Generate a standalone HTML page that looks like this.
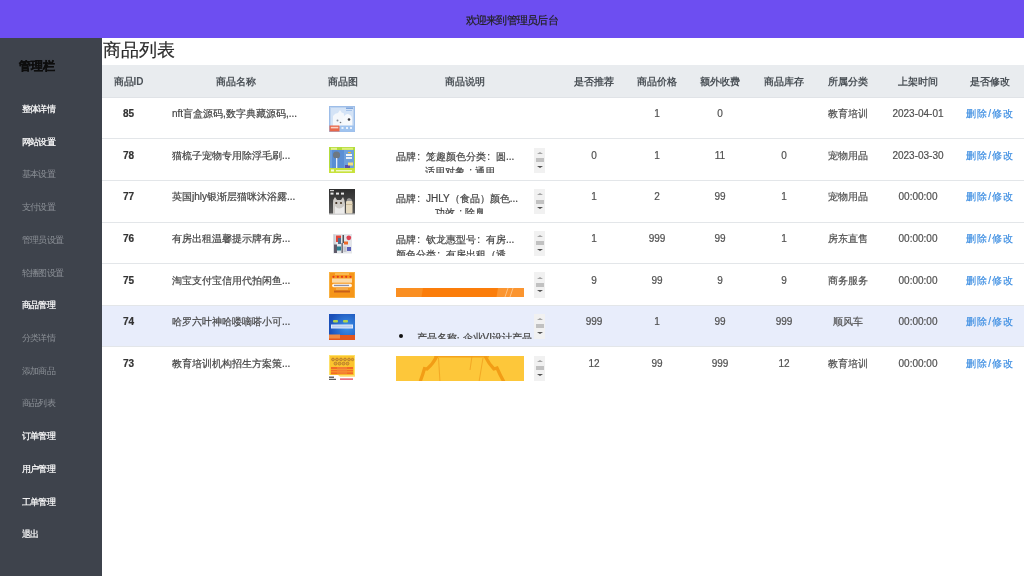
<!DOCTYPE html>
<html><head><meta charset="utf-8"><style>
*{box-sizing:border-box;margin:0;padding:0}
html,body{width:1024px;height:576px;overflow:hidden;background:#fff;font-family:"Liberation Sans", sans-serif;}
.a{position:absolute;white-space:nowrap}
.c,.a{-webkit-text-stroke:0.2px currentColor}
.top{position:absolute;left:0;top:0;width:1024px;height:38.2px;background:#6d4ef1}
.side{position:absolute;left:0;top:38.2px;width:102px;height:540px;background:#3e434c}
.mi{position:absolute;left:22px;font-size:9px;letter-spacing:-0.8px;line-height:12px;height:12px;color:#fff;white-space:nowrap}
.mi{-webkit-text-stroke:0.2px #fff}
.mi.g{color:#8b9096;-webkit-text-stroke:0}
.th0{position:absolute;left:102px;top:65px;width:922px;height:32.9px;background:#e9ecef;border-bottom:1px solid #e0e3e7}
.hc{position:absolute;top:75.5px;height:12px;line-height:12px;font-size:10px;font-weight:bold;color:#4d5359;text-align:center;white-space:nowrap}
.row{position:absolute;left:102px;width:922px;height:41.6px;border-bottom:1px solid #e3e6e9}
.c{position:absolute;height:12px;line-height:12px;font-size:10px;color:#505050;text-align:center;white-space:nowrap}
.im{position:absolute;width:26px;height:26px;overflow:hidden}
.im4{position:absolute;width:19px;height:19.5px;overflow:hidden}
.sb{position:absolute;left:534.3px;width:11px;height:25.3px;background:#f1f1f1}
.sb .up{position:absolute;left:2.5px;top:4.3px;width:0;height:0;border-left:3px solid transparent;border-right:3px solid transparent;border-bottom:2.6px solid #a3a3a3}
.sb .th{position:absolute;left:2px;top:10.5px;width:7.8px;height:4px;background:#c1c1c1}
.sb .dn{position:absolute;left:2.5px;top:18.2px;width:0;height:0;border-left:3px solid transparent;border-right:3px solid transparent;border-top:2.6px solid #505050}
.lk{color:#3f8fe2;letter-spacing:0.9px}
</style></head><body><div id="w" style="position:absolute;left:0;top:0;width:1024px;height:576px;will-change:transform;background:#fff">
<div class="top"></div>
<div class="a" style="left:465.5px;top:13.5px;font-size:11px;letter-spacing:-0.75px;line-height:13px;color:#222">欢迎来到管理员后台</div>
<div class="side"></div>
<div class="a" style="left:19.4px;top:59px;font-size:12px;line-height:14px;font-weight:bold;color:#0d0d0d;-webkit-text-stroke:0.35px #0d0d0d">管理栏</div>

<div class="mi" style="top:103.00px">整体详情</div>
<div class="mi" style="top:135.72px">网站设置</div>
<div class="mi g" style="top:168.44px">基本设置</div>
<div class="mi g" style="top:201.16px">支付设置</div>
<div class="mi g" style="top:233.88px">管理员设置</div>
<div class="mi g" style="top:266.60px">轮播图设置</div>
<div class="mi" style="top:299.32px">商品管理</div>
<div class="mi g" style="top:332.04px">分类详情</div>
<div class="mi g" style="top:364.76px">添加商品</div>
<div class="mi g" style="top:397.48px">商品列表</div>
<div class="mi" style="top:430.20px">订单管理</div>
<div class="mi" style="top:462.92px">用户管理</div>
<div class="mi" style="top:495.64px">工单管理</div>
<div class="mi" style="top:528.36px">退出</div>
<div class="a" style="left:103px;top:39.3px;font-size:17.5px;line-height:23px;color:#2b2b2b">商品列表</div>
<div class="th0"></div>
<div class="hc" style="left:102px;width:53px">商品ID</div>
<div class="hc" style="left:155px;width:162px">商品名称</div>
<div class="hc" style="left:317px;width:52px">商品图</div>
<div class="hc" style="left:369px;width:192px">商品说明</div>
<div class="hc" style="left:561px;width:66px">是否推荐</div>
<div class="hc" style="left:627px;width:60px">商品价格</div>
<div class="hc" style="left:687px;width:66px">额外收费</div>
<div class="hc" style="left:753px;width:62px">商品库存</div>
<div class="hc" style="left:815px;width:66px">所属分类</div>
<div class="hc" style="left:881px;width:74px">上架时间</div>
<div class="hc" style="left:955px;width:70px">是否修改</div>
<div class="row" style="top:97.90px;"></div>
<div class="c" style="left:102px;width:53px;top:108.10px;font-weight:bold;color:#333">85</div>
<div class="c" style="left:172px;top:108.10px;text-align:left;color:#444">nft盲盒源码,数字典藏源码,...</div>
<div class="a" style="left:329.4px;top:105.70px;width:26px;height:26px;overflow:hidden"><svg width="26" height="26" viewBox="0 0 26 26" style="position:absolute;left:0;top:0">
<rect x="0" y="0" width="26" height="26" fill="#bcd3f0"/>
<rect x="0.5" y="0.5" width="25" height="25" fill="none" stroke="#9dbde8" stroke-width="1"/>
<rect x="2" y="2" width="22" height="18" fill="#d4e3f6"/>
<path d="M4 20 V10 Q6 7 9 7 L11 4 L13 7 Q15 6 15 9 V20 Z" fill="#f4f7fb"/>
<path d="M14 20 V12 Q16 8 19 8 Q23 9 23 13 V20 Z" fill="#f7f9fc"/>
<rect x="17" y="1.5" width="7" height="1.5" fill="#7fa6dc"/>
<rect x="17" y="4" width="6" height="1" fill="#a6c3ea"/>
<circle cx="8.5" cy="14.5" r="1" fill="#8a8f99"/>
<circle cx="11.5" cy="16.5" r="0.8" fill="#707680"/>
<circle cx="20" cy="13.5" r="1.3" fill="#3a3a40"/>
<rect x="0.5" y="19.5" width="10" height="6" fill="#e8674a"/>
<rect x="1.8" y="20.8" width="7.5" height="1.6" fill="#fbd2c4"/>
<rect x="11" y="19.5" width="14.5" height="6" fill="#9fc3ef"/>
<rect x="12.5" y="21" width="2" height="2" fill="#e9f1fc"/>
<rect x="17" y="21" width="2" height="2" fill="#e9f1fc"/>
<rect x="21" y="21" width="2" height="2" fill="#e9f1fc"/>
</svg></div>
<div class="c" style="left:627px;width:60px;top:108.10px">1</div>
<div class="c" style="left:687px;width:66px;top:108.10px">0</div>
<div class="c" style="left:815px;width:66px;top:108.10px">教育培训</div>
<div class="c" style="left:881px;width:74px;top:108.10px">2023-04-01</div>
<div class="c lk" style="left:955px;width:70px;top:108.10px">删除/修改</div>
<div class="row" style="top:139.50px;"></div>
<div class="c" style="left:102px;width:53px;top:149.70px;font-weight:bold;color:#333">78</div>
<div class="c" style="left:172px;top:149.70px;text-align:left;color:#444">猫梳子宠物专用除浮毛刷...</div>
<div class="a" style="left:329.4px;top:147.30px;width:26px;height:26px;overflow:hidden"><svg width="26" height="26" viewBox="0 0 26 26" style="position:absolute;left:0;top:0">
<rect x="0" y="0" width="26" height="26" fill="#b4dc3c"/>
<rect x="1" y="3" width="24" height="18" fill="#6ea0dc"/>
<rect x="3" y="3" width="12" height="18" fill="#5a8ed4"/>
<rect x="13" y="0.8" width="11" height="2" fill="#dcef7a"/>
<rect x="2" y="0.8" width="6" height="2" fill="#e4f290"/>
<circle cx="7.5" cy="8" r="3.6" fill="#6e7882"/>
<rect x="7" y="11" width="1.3" height="10" fill="#e6eef8"/>
<rect x="17" y="7" width="6" height="2" fill="#f4f7fb"/>
<rect x="17" y="10" width="6" height="2" fill="#e6eef8"/>
<rect x="19" y="5" width="3" height="1.2" fill="#f2c030"/>
<rect x="16" y="18" width="5" height="3" fill="#5a4fa8"/>
<rect x="19" y="15.5" width="5" height="3" fill="#f3e080"/>
<rect x="0" y="21" width="26" height="5" fill="#c8e23c"/>
<rect x="2" y="22.5" width="3" height="2" fill="#f6fbe0"/>
<rect x="7" y="23" width="16" height="1.4" fill="#eff8c8"/>
</svg></div>
<div class="a" style="left:386px;top:147.50px;width:148px;height:25.2px;overflow:hidden">
<div class="a" style="left:10px;top:2.8px;font-size:10px;line-height:13px;color:#444">品牌<span style="display:inline-block;width:10px;padding-left:1.2px">:</span>笼趣颜色分类<span style="display:inline-block;width:10px;padding-left:1.2px">:</span>圆...</div>
<div class="a" style="left:10px;width:128px;top:17.4px;font-size:10px;line-height:13px;color:#444;text-align:center">适用对象<span style="display:inline-block;width:10px;padding-left:1.2px">:</span>通用</div>
</div>
<div class="sb" style="top:147.50px"><div class="up"></div><div class="th"></div><div class="dn"></div></div>
<div class="c" style="left:561px;width:66px;top:149.70px">0</div>
<div class="c" style="left:627px;width:60px;top:149.70px">1</div>
<div class="c" style="left:687px;width:66px;top:149.70px">11</div>
<div class="c" style="left:753px;width:62px;top:149.70px">0</div>
<div class="c" style="left:815px;width:66px;top:149.70px">宠物用品</div>
<div class="c" style="left:881px;width:74px;top:149.70px">2023-03-30</div>
<div class="c lk" style="left:955px;width:70px;top:149.70px">删除/修改</div>
<div class="row" style="top:181.10px;"></div>
<div class="c" style="left:102px;width:53px;top:191.30px;font-weight:bold;color:#333">77</div>
<div class="c" style="left:172px;top:191.30px;text-align:left;color:#444">英国jhly银渐层猫咪沐浴露...</div>
<div class="a" style="left:329.4px;top:188.90px;width:26px;height:26px;overflow:hidden"><svg width="26" height="26" viewBox="0 0 26 26" style="position:absolute;left:0;top:0">
<defs><linearGradient id="g3" x1="0" y1="0" x2="0" y2="1"><stop offset="0" stop-color="#2e2e2e"/><stop offset="1" stop-color="#5a5a5a"/></linearGradient></defs>
<rect x="0" y="0" width="26" height="26" fill="url(#g3)"/>
<rect x="1" y="1" width="4" height="1.2" fill="#cfcfcf"/>
<rect x="1.5" y="3.6" width="3" height="2" fill="#e8e8e8"/>
<rect x="7" y="3.6" width="3" height="2" fill="#e8e8e8"/>
<rect x="12" y="3.6" width="3" height="2" fill="#e8e8e8"/>
<path d="M4 26 V14 Q4 10 6 8 L8 11 H12 L14 8 Q16 11 16 15 V26 Z" fill="#cdcac6"/>
<path d="M6 26 V17 Q10 22 15 17 V26 Z" fill="#ecebea"/>
<circle cx="7.3" cy="14" r="1.1" fill="#3a2a1c"/>
<circle cx="12" cy="14" r="1.1" fill="#4a3a28"/>
<path d="M17.5 12 Q17.5 9.5 20 9 Q23 9.5 23 12 Z" fill="#9a9896"/>
<rect x="17" y="12" width="6.5" height="12.5" rx="1" fill="#e6dac0"/>
<rect x="17" y="15" width="6.5" height="1" fill="#c8b898"/>
<rect x="0" y="24.5" width="26" height="1.5" fill="#d4d4d4"/>
</svg></div>
<div class="a" style="left:386px;top:189.10px;width:148px;height:25.2px;overflow:hidden">
<div class="a" style="left:10px;top:2.8px;font-size:10px;line-height:13px;color:#444">品牌<span style="display:inline-block;width:10px;padding-left:1.2px">:</span>JHLY（食品）颜色...</div>
<div class="a" style="left:10px;width:128px;top:17.4px;font-size:10px;line-height:13px;color:#444;text-align:center">功效<span style="display:inline-block;width:10px;padding-left:1.2px">:</span>除臭</div>
</div>
<div class="sb" style="top:189.10px"><div class="up"></div><div class="th"></div><div class="dn"></div></div>
<div class="c" style="left:561px;width:66px;top:191.30px">1</div>
<div class="c" style="left:627px;width:60px;top:191.30px">2</div>
<div class="c" style="left:687px;width:66px;top:191.30px">99</div>
<div class="c" style="left:753px;width:62px;top:191.30px">1</div>
<div class="c" style="left:815px;width:66px;top:191.30px">宠物用品</div>
<div class="c" style="left:881px;width:74px;top:191.30px">00:00:00</div>
<div class="c lk" style="left:955px;width:70px;top:191.30px">删除/修改</div>
<div class="row" style="top:222.70px;"></div>
<div class="c" style="left:102px;width:53px;top:232.90px;font-weight:bold;color:#333">76</div>
<div class="c" style="left:172px;top:232.90px;text-align:left;color:#444">有房出租温馨提示牌有房...</div>
<div class="a" style="left:332.9px;top:234.00px;width:19px;height:19.5px;overflow:hidden"><svg width="19" height="19.5" viewBox="0 0 19 19.5" style="position:absolute;left:0;top:0">
<rect x="0" y="0" width="19" height="19.5" fill="#e4e6ea"/>
<rect x="0.5" y="0.5" width="2" height="18" fill="#c9ced4"/>
<rect x="3" y="1.5" width="5" height="6.5" fill="#e2473a"/>
<rect x="9.5" y="1" width="1.5" height="8" fill="#505458"/>
<circle cx="15.8" cy="3.8" r="2.4" fill="#df3f50"/>
<rect x="5" y="4" width="3" height="6" fill="#4f6e8c"/>
<rect x="11" y="7.5" width="4" height="3" fill="#ee6a2a"/>
<rect x="1" y="10.5" width="3" height="8.5" fill="#5e5a6a"/>
<rect x="4" y="12.5" width="4" height="4" fill="#2c7f8f"/>
<rect x="8.5" y="9" width="1.3" height="10" fill="#5a5a66"/>
<rect x="10.5" y="12.5" width="3" height="5.5" fill="#c4c6ce"/>
<rect x="14" y="13" width="4" height="4" fill="#5a5fb8"/>
</svg></div>
<div class="a" style="left:386px;top:230.70px;width:148px;height:25.2px;overflow:hidden">
<div class="a" style="left:10px;top:2.8px;font-size:10px;line-height:13px;color:#444">品牌<span style="display:inline-block;width:10px;padding-left:1.2px">:</span>钦龙惠型号<span style="display:inline-block;width:10px;padding-left:1.2px">:</span>有房...</div>
<div class="a" style="left:10px;top:17.4px;font-size:10px;line-height:13px;color:#444">颜色分类<span style="display:inline-block;width:10px;padding-left:1.2px">:</span>有房出租（透</div>
</div>
<div class="sb" style="top:230.70px"><div class="up"></div><div class="th"></div><div class="dn"></div></div>
<div class="c" style="left:561px;width:66px;top:232.90px">1</div>
<div class="c" style="left:627px;width:60px;top:232.90px">999</div>
<div class="c" style="left:687px;width:66px;top:232.90px">99</div>
<div class="c" style="left:753px;width:62px;top:232.90px">1</div>
<div class="c" style="left:815px;width:66px;top:232.90px">房东直售</div>
<div class="c" style="left:881px;width:74px;top:232.90px">00:00:00</div>
<div class="c lk" style="left:955px;width:70px;top:232.90px">删除/修改</div>
<div class="row" style="top:264.30px;"></div>
<div class="c" style="left:102px;width:53px;top:274.50px;font-weight:bold;color:#333">75</div>
<div class="c" style="left:172px;top:274.50px;text-align:left;color:#444">淘宝支付宝信用代拍闲鱼...</div>
<div class="a" style="left:329.4px;top:272.10px;width:26px;height:26px;overflow:hidden"><svg width="26" height="26" viewBox="0 0 26 26" style="position:absolute;left:0;top:0">
<rect x="0" y="0" width="26" height="26" fill="#f6961a"/>
<rect x="0.5" y="0.5" width="25" height="25" fill="none" stroke="#f8b040" stroke-width="1"/>
<rect x="6" y="1" width="14" height="2" fill="#f9b850"/>
<circle cx="4.5" cy="4.8" r="1.1" fill="#e3381a"/>
<circle cx="8.8" cy="4.8" r="1.1" fill="#e3381a"/>
<circle cx="13" cy="4.8" r="1.1" fill="#e3381a"/>
<circle cx="17.2" cy="4.8" r="1.1" fill="#e3381a"/>
<circle cx="21.5" cy="4.8" r="1.1" fill="#e3381a"/>
<rect x="3" y="6.5" width="20" height="4.2" fill="#fbd9a6"/>
<rect x="3" y="11.8" width="20" height="3.4" rx="1.7" fill="#fff4e4"/>
<rect x="5" y="12.8" width="15" height="1.3" fill="#8a8ea8"/>
<rect x="7" y="16.5" width="12" height="1" fill="#f2c080"/>
<rect x="5" y="18.5" width="16" height="2" fill="#c8601a"/>
</svg></div>
<div class="a" style="left:386px;top:272.30px;width:148px;height:25.2px;overflow:hidden">
<div class="a" style="left:9.8px;top:15.4px;width:128px;height:12px;background:#fb7d0a;overflow:hidden"><svg width="128" height="12" style="position:absolute;left:0;top:0"><path d="M0 0 H27 L25 12 H0 Z" fill="#fa8f22"/><path d="M102 0 H128 V12 H100 Z" fill="#fb9530"/><path d="M112 0 L108 12 M117 0 L113 12" stroke="#fdc080" stroke-width="1"/></svg></div>
</div>
<div class="sb" style="top:272.30px"><div class="up"></div><div class="th"></div><div class="dn"></div></div>
<div class="c" style="left:561px;width:66px;top:274.50px">9</div>
<div class="c" style="left:627px;width:60px;top:274.50px">99</div>
<div class="c" style="left:687px;width:66px;top:274.50px">9</div>
<div class="c" style="left:753px;width:62px;top:274.50px">9</div>
<div class="c" style="left:815px;width:66px;top:274.50px">商务服务</div>
<div class="c" style="left:881px;width:74px;top:274.50px">00:00:00</div>
<div class="c lk" style="left:955px;width:70px;top:274.50px">删除/修改</div>
<div class="row" style="top:305.90px;background:#e8edfb;"></div>
<div class="c" style="left:102px;width:53px;top:316.10px;font-weight:bold;color:#333">74</div>
<div class="c" style="left:172px;top:316.10px;text-align:left;color:#444">哈罗六叶神哈喽嘀嗒小可...</div>
<div class="a" style="left:329.4px;top:313.70px;width:26px;height:26px;overflow:hidden"><svg width="26" height="26" viewBox="0 0 26 26" style="position:absolute;left:0;top:0">
<defs><radialGradient id="g6" cx="0.7" cy="0.5" r="0.7"><stop offset="0" stop-color="#3d92e8"/><stop offset="1" stop-color="#1a4fb8"/></radialGradient></defs>
<rect x="0" y="0" width="26" height="26" fill="url(#g6)"/>
<rect x="4" y="6" width="5" height="2.4" rx="1" fill="#b4d64a"/>
<rect x="14" y="6" width="5" height="2.4" rx="1" fill="#b4d64a"/>
<rect x="2" y="10.5" width="22" height="4" fill="#dfe9fb"/>
<rect x="3" y="11.5" width="20" height="2" fill="#b8cdf2"/>
<rect x="0" y="21" width="26" height="5" fill="#e3561c"/>
<rect x="0" y="20.5" width="11" height="4" fill="#f28a40"/>
</svg></div>
<div class="a" style="left:386px;top:313.90px;width:148px;height:25.2px;overflow:hidden">
<div class="a" style="left:13.4px;top:20.4px;width:4px;height:4px;border-radius:50%;background:#111"></div>
<div class="a" style="left:30.5px;top:17.3px;font-size:10px;line-height:13px;color:#444">产品名称· 企业VI设计产品</div>
</div>
<div class="sb" style="top:313.90px"><div class="up"></div><div class="th"></div><div class="dn"></div></div>
<div class="c" style="left:561px;width:66px;top:316.10px">999</div>
<div class="c" style="left:627px;width:60px;top:316.10px">1</div>
<div class="c" style="left:687px;width:66px;top:316.10px">99</div>
<div class="c" style="left:753px;width:62px;top:316.10px">999</div>
<div class="c" style="left:815px;width:66px;top:316.10px">顺风车</div>
<div class="c" style="left:881px;width:74px;top:316.10px">00:00:00</div>
<div class="c lk" style="left:955px;width:70px;top:316.10px">删除/修改</div>
<div class="row" style="top:347.50px;border-bottom:none;"></div>
<div class="c" style="left:102px;width:53px;top:357.70px;font-weight:bold;color:#333">73</div>
<div class="c" style="left:172px;top:357.70px;text-align:left;color:#444">教育培训机构招生方案策...</div>
<div class="a" style="left:329.4px;top:355.30px;width:26px;height:26px;overflow:hidden"><svg width="26" height="26" viewBox="0 0 26 26" style="position:absolute;left:0;top:0">
<rect x="0" y="0" width="26" height="26" fill="#fcc52e"/>
<rect x="0.5" y="0.5" width="25" height="20" fill="none" stroke="#fde06a" stroke-width="1"/>
<g fill="#e5a22a" stroke="#9a6a30" stroke-width="0.6">
<circle cx="4" cy="4.5" r="1.4"/><circle cx="8" cy="4.5" r="1.4"/><circle cx="12" cy="4.5" r="1.4"/><circle cx="16" cy="4.5" r="1.4"/><circle cx="20" cy="4.5" r="1.4"/><circle cx="23.5" cy="4.5" r="1.2"/>
<circle cx="6.5" cy="8.6" r="1.5"/><circle cx="10.5" cy="8.6" r="1.5"/><circle cx="14.5" cy="8.6" r="1.5"/><circle cx="18.5" cy="8.6" r="1.5"/>
</g>
<rect x="2" y="12" width="22" height="2" fill="#f26a26"/>
<rect x="2" y="14.6" width="22" height="2" fill="#f36e28"/>
<rect x="2" y="17.2" width="22" height="2" fill="#f26a26"/>
<rect x="8" y="12" width="10" height="7" fill="#f58a3a" opacity="0.6"/>
<path d="M0 20 H9 L11 21.5 H26 V26 H0 Z" fill="#ffffff"/>
<rect x="0" y="21.5" width="5" height="1.5" fill="#666"/>
<rect x="0" y="23.8" width="7" height="1" fill="#333"/>
<rect x="11" y="23.5" width="13" height="1.2" fill="#e2364e"/>
</svg></div>
<div class="a" style="left:386px;top:355.50px;width:148px;height:25.2px;overflow:hidden">
<div class="a" style="left:10.2px;top:0px;width:127.8px;height:25.4px;background:#fdc73a;overflow:hidden"><svg width="128" height="26" style="position:absolute;left:0;top:0"><path d="M38 0 H93 V1.6 H38 Z" fill="#f4a41c"/><path d="M41 0 Q37 8 31 13 L28.5 12.5 Q27 18 24 26" fill="none" stroke="#f29d16" stroke-width="3.2"/><path d="M42.5 2 L44 26" stroke="#f0a020" stroke-width="0.8" fill="none"/><path d="M76 0 L74 14" stroke="#f0a020" stroke-width="0.8" fill="none"/><path d="M87 2 L83 26" stroke="#f0a020" stroke-width="0.8" fill="none"/><path d="M89 0 Q93 8 98 13 L101 12 Q104 19 108 26" fill="none" stroke="#f29d16" stroke-width="3.2"/></svg></div>
</div>
<div class="sb" style="top:355.50px"><div class="up"></div><div class="th"></div><div class="dn"></div></div>
<div class="c" style="left:561px;width:66px;top:357.70px">12</div>
<div class="c" style="left:627px;width:60px;top:357.70px">99</div>
<div class="c" style="left:687px;width:66px;top:357.70px">999</div>
<div class="c" style="left:753px;width:62px;top:357.70px">12</div>
<div class="c" style="left:815px;width:66px;top:357.70px">教育培训</div>
<div class="c" style="left:881px;width:74px;top:357.70px">00:00:00</div>
<div class="c lk" style="left:955px;width:70px;top:357.70px">删除/修改</div>
</div></body></html>
